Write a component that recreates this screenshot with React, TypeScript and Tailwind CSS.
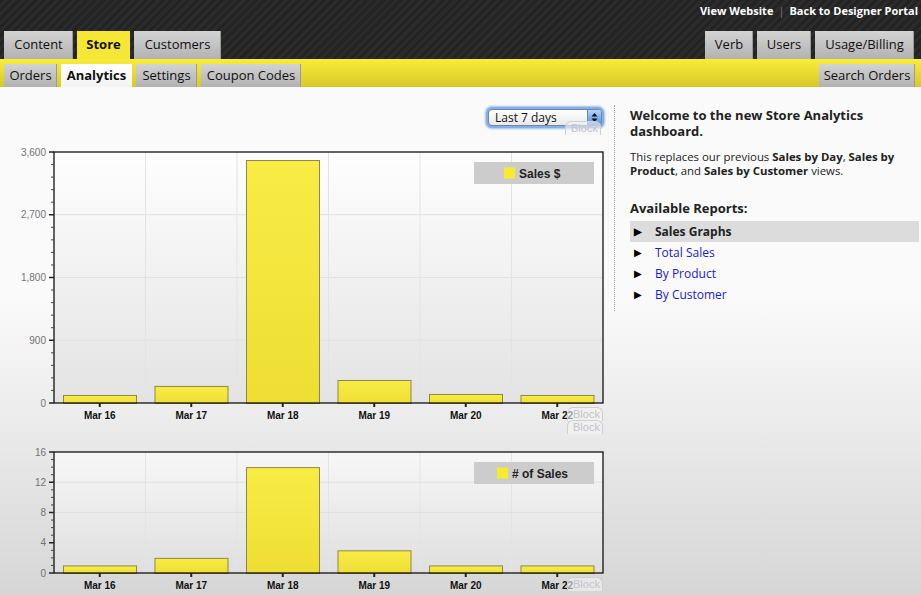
import React from 'react';

const FONT = "font-['Open_Sans',sans-serif]";

interface TabProps {
  label: string;
  w: string;
  kind?: 'gray' | 'yellow' | 'white';
  h: string;
}

const Tab: React.FC<TabProps> = ({ label, w, kind = 'gray', h }) => {
  const skin =
    kind === 'yellow'
      ? 'bg-[#f6e736] font-bold'
      : kind === 'white'
      ? 'bg-gradient-to-b from-white to-[#f3f3f3] font-bold'
      : 'bg-gradient-to-b from-[#d3d3d3] to-[#b2b2b2] shadow-[inset_-1px_0_0_#9a9a9a]';
  return (
    <div className={`${w} ${h} ${skin} flex items-center justify-center text-[13px] text-[#111]`}>
      {label}
    </div>
  );
};

const BlockTag: React.FC<{ className: string }> = ({ className }) => (
  <div
    className={`absolute w-[36px] h-[14px] rounded-t-[6px] border border-b-0 border-[#cfcfcf] bg-[#f4f4f4]/60 text-[11px] leading-[13px] text-[#c3c3c8] font-['Liberation_Sans',sans-serif] pl-[5px] ${className}`}
  >
    Block
  </div>
);

interface ChartProps {
  id: string;
  height: number;
  plotH: number;
  max: number;
  majors: number[];
  minorPer: number;
  labels: string[];
  values: number[];
  legend: string;
  legendSq: number;
  top: string;
  bottom: string;
}

const Chart: React.FC<ChartProps> = ({ id, height, plotH, max, majors, minorPer, labels, values, legend, legendSq, top, bottom }) => {
  const x0 = 54;
  const y0 = 7;
  const w = 549;
  const yb = y0 + plotH;
  const col = w / 6;
  const ys = (v: number) => yb - (v / max) * plotH;
  const minors: number[] = [];
  for (let i = 0; i < majors.length - 1; i++) {
    for (let k = 1; k < minorPer; k++) {
      minors.push(majors[i] + ((majors[i + 1] - majors[i]) * k) / minorPer);
    }
  }
  return (
    <svg width={610} height={height} className="block font-['Liberation_Sans',sans-serif]">
      <defs>
        <linearGradient id={`bg-${id}`} x1="0" y1="0" x2="0" y2="1">
          <stop offset="0" stopColor={top} />
          <stop offset="1" stopColor={bottom} />
        </linearGradient>
        <linearGradient id={`bar-${id}`} x1="0" y1="0" x2="0" y2="1">
          <stop offset="0" stopColor="#f8ec45" />
          <stop offset="1" stopColor="#eede34" />
        </linearGradient>
      </defs>
      <rect x={x0} y={y0} width={w} height={plotH} fill={`url(#bg-${id})`} />
      {majors.slice(1, -1).map(v => (
        <line key={`h${v}`} x1={x0} x2={x0 + w} y1={ys(v)} y2={ys(v)} stroke="#e1e1e1" />
      ))}
      {[1, 2, 3, 4, 5].map(i => (
        <line key={`v${i}`} x1={x0 + col * i} x2={x0 + col * i} y1={y0} y2={yb} stroke="#e3e3e3" />
      ))}
      {values.map((v, i) => {
        const hgt = (v / max) * plotH;
        return (
          <rect
            key={i}
            x={x0 + col * i + 9.5}
            y={yb - hgt + 0.5}
            width={73}
            height={hgt}
            fill={`url(#bar-${id})`}
            stroke="#8f8745"
          />
        );
      })}
      <rect x={x0} y={y0} width={w} height={plotH} fill="none" stroke="#111" strokeWidth={1.3} />
      {majors.map(v => (
        <g key={`m${v}`}>
          <line x1={x0 - 5} x2={x0} y1={ys(v)} y2={ys(v)} stroke="#222" strokeWidth={1.5} />
          <text x={x0 - 8} y={ys(v) + 3.5} textAnchor="end" fontSize={10} fill="#727272">
            {v.toLocaleString('en-US')}
          </text>
        </g>
      ))}
      {minors.map(v => (
        <line key={`n${v}`} x1={x0 - 3} x2={x0} y1={ys(v)} y2={ys(v)} stroke="#444" />
      ))}
      {labels.map((l, i) => (
        <g key={l}>
          <line x1={x0 + col * (i + 0.5)} x2={x0 + col * (i + 0.5)} y1={yb} y2={yb + 4} stroke="#222" strokeWidth={2} />
          <text x={x0 + col * (i + 0.5)} y={yb + 16} textAnchor="middle" fontSize={10} fontWeight="bold" fill="#111">
            {l}
          </text>
        </g>
      ))}
      <rect x={474} y={y0 + 10} width={120} height={22} fill="#cccccc" />
      <rect x={legendSq} y={y0 + 15.5} width={11} height={11} fill="#f8eb2e" />
      <text x={legendSq + 15} y={y0 + 25.5} fontSize={12} fontWeight="bold" fill="#222">
        {legend}
      </text>
    </svg>
  );
};

const labels = ['Mar 16', 'Mar 17', 'Mar 18', 'Mar 19', 'Mar 20', 'Mar 22'];

export default function App() {
  return (
    <div className={`${FONT} w-[921px] h-[595px] overflow-hidden flex flex-col`}>
      {/* header */}
      <div className="h-[59px] flex flex-col bg-[repeating-linear-gradient(-45deg,#232323_0px,#232323_3px,#2b2b2b_3px,#2b2b2b_6px)]">
        <div className="h-[31px] flex justify-end items-start pt-[3px] pr-[3px] text-[11px] font-bold text-white">
          <span>View Website</span>
          <span className="mx-[5px] font-normal text-[#777]">|</span>
          <span>Back to Designer Portal</span>
        </div>
        <div className="h-[28px] flex justify-between px-[4px]">
          <div className="flex gap-[4px]">
            <Tab label="Content" w="w-[69px]" h="h-[28px]" />
            <Tab label="Store" w="w-[53px]" h="h-[28px]" kind="yellow" />
            <Tab label="Customers" w="w-[87px]" h="h-[28px]" />
          </div>
          <div className="flex gap-[4px] pr-[3px]">
            <Tab label="Verb" w="w-[48px]" h="h-[28px]" />
            <Tab label="Users" w="w-[54px]" h="h-[28px]" />
            <Tab label="Usage/Billing" w="w-[99px]" h="h-[28px]" />
          </div>
        </div>
      </div>

      {/* yellow sub nav */}
      <div className="h-[28px] pt-[5px] flex justify-between px-[4px] bg-gradient-to-b from-[#f9ed3a] to-[#d8c827]">
        <div className="flex gap-[4px]">
          <Tab label="Orders" w="w-[53px]" h="h-[23px]" />
          <Tab label="Analytics" w="w-[71px]" h="h-[23px]" kind="white" />
          <Tab label="Settings" w="w-[61px]" h="h-[23px]" />
          <Tab label="Coupon Codes" w="w-[100px]" h="h-[23px]" />
        </div>
        <div className="pr-[2px]">
          <Tab label="Search Orders" w="w-[96px]" h="h-[23px]" />
        </div>
      </div>

      {/* content */}
      <div className="flex-1 flex bg-[linear-gradient(to_bottom,#fafafa_0%,#fafafa_42%,#d6d6d6_100%)]">
        <div className="w-[614px] shrink-0 flex flex-col">
          <div className="flex justify-end pt-[20px] pr-[10px]">
            <div className="relative w-[118px] h-[21px] rounded-[6px] bg-[#86aee6] p-[2px] shadow-[0_0_2px_1px_#9cc0ee]">
              <div className="flex h-full rounded-[4px] border border-[#6f86a8] bg-gradient-to-b from-white to-[#e9e9e9] overflow-hidden">
                <span className="flex-1 pl-[6px] text-[12px] leading-[15px] text-[#111]">Last 7 days</span>
                <span className="w-[14px] border-l border-[#6f86a8] bg-gradient-to-b from-[#b5d5f7] to-[#4b8fe2] flex items-center justify-center">
                  <svg width="7" height="11" viewBox="0 0 7 11">
                    <path d="M3.5 1 L6.5 4.5 L0.5 4.5 Z" fill="#111" />
                    <path d="M3.5 10 L6.5 6.5 L0.5 6.5 Z" fill="#111" />
                  </svg>
                </span>
              </div>
              <BlockTag className="left-[79px] top-[14px]" />
            </div>
          </div>

          <div className="relative mt-[17px]">
            <Chart
              id="c1"
              height={280}
              plotH={251}
              max={3600}
              majors={[0, 900, 1800, 2700, 3600]}
              minorPer={5}
              labels={labels}
              values={[115, 245, 3485, 330, 130, 115]}
              legend="Sales $"
              legendSq={504}
              top="#fefefe"
              bottom="#e3e3e3"
            />
            <BlockTag className="left-[567px] top-[262px]" />
            <BlockTag className="left-[567px] top-[275px]" />
          </div>

          <div className="relative mt-[20px]">
            <Chart
              id="c2"
              height={150}
              plotH={121}
              max={16}
              majors={[0, 4, 8, 12, 16]}
              minorPer={4}
              labels={labels}
              values={[1, 2, 14, 3, 1, 1]}
              legend="# of Sales"
              legendSq={497}
              top="#f7f7f7"
              bottom="#dfdfdf"
            />
            <BlockTag className="left-[567px] top-[132px]" />
          </div>
        </div>

        <div className="flex-1 pr-[2px]">
          <div className="mt-[18px] border-l border-dotted border-[#9a9a9a] pl-[15px] pt-[2px] pb-[6px] text-[#222]">
            <h1 className="text-[13px] leading-[16px] font-bold">
              Welcome to the new Store Analytics dashboard.
            </h1>
            <p className="mt-[11px] text-[11.4px] leading-[14px]">
              This replaces our previous <b>Sales by Day</b>, <b>Sales by Product</b>, and{' '}
              <b>Sales by Customer</b> views.
            </p>
            <h2 className="mt-[22px] text-[13px] leading-[16px] font-bold">Available Reports:</h2>
            <ul className="mt-[5px] text-[12px]">
              {['Sales Graphs', 'Total Sales', 'By Product', 'By Customer'].map((r, i) => (
                <li
                  key={r}
                  className={`h-[21px] flex items-center ${i === 0 ? 'bg-[#dcdcdc] font-bold text-[#222]' : 'text-[#1a1acf]'}`}
                >
                  <span className="w-[25px] pl-[4px] text-[10px] text-black">▶</span>
                  {r}
                </li>
              ))}
            </ul>
          </div>
        </div>
      </div>
    </div>
  );
}
